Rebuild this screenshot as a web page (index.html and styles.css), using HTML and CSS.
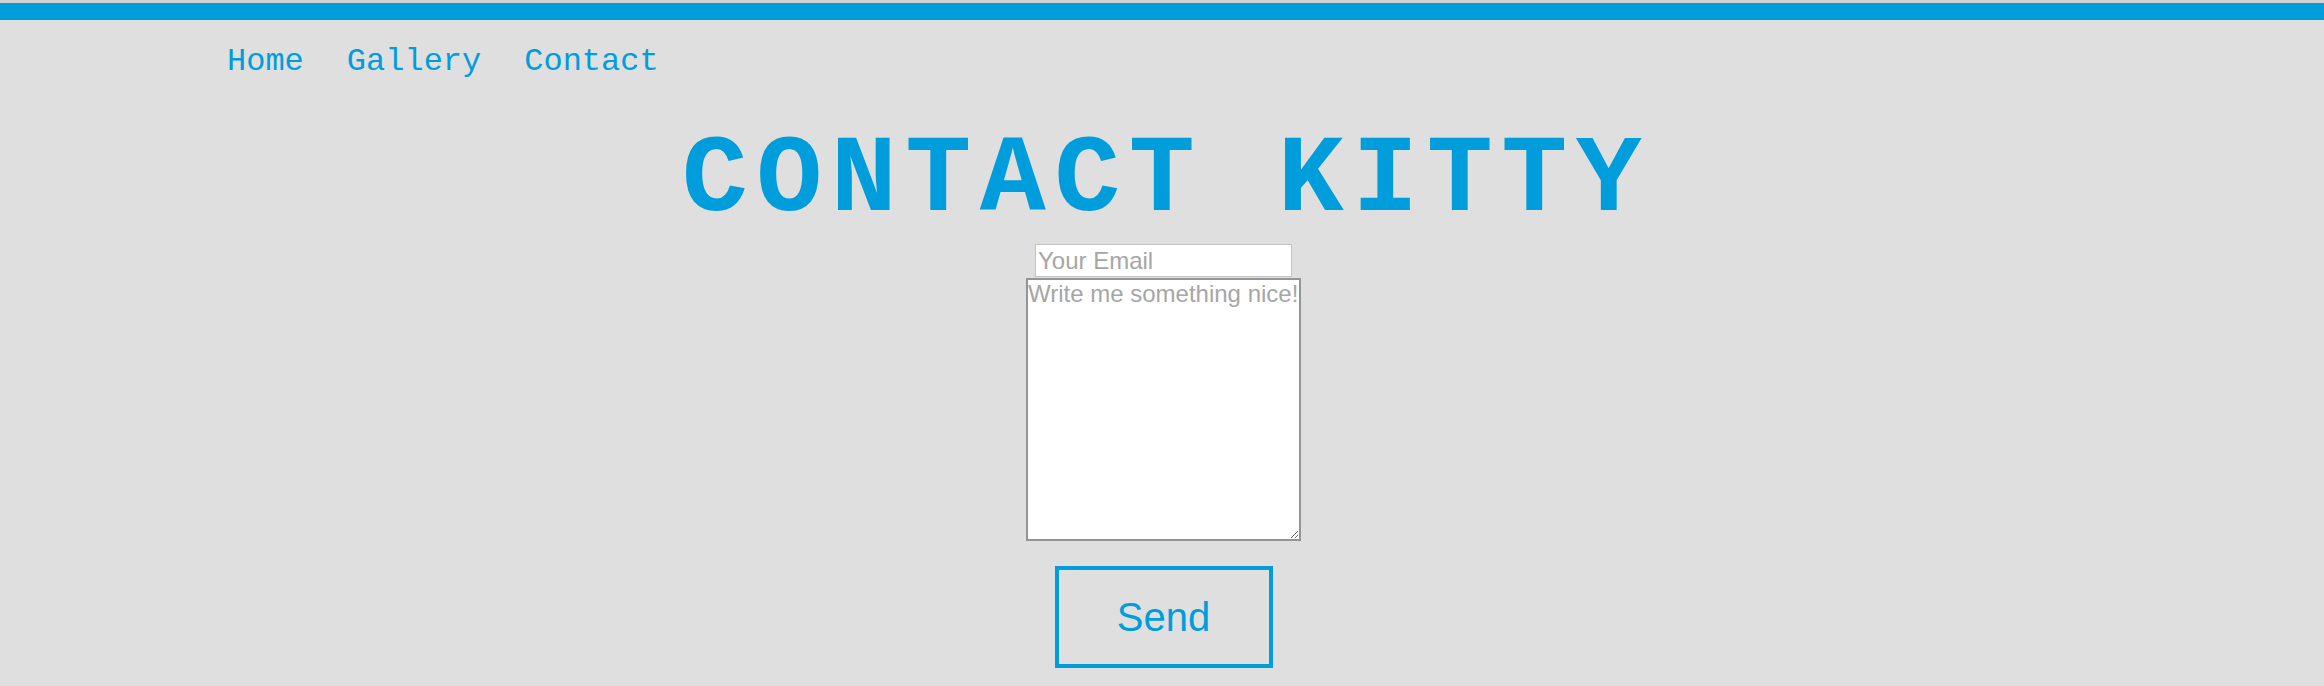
FILE: index.html
```html
<!DOCTYPE html>
<html lang="en">
<head>
<meta charset="utf-8">
<title>Contact Kitty</title>
<link rel="stylesheet" href="styles.css">
</head>
<body>
<div class="topbar"></div>
<nav class="nav">
  <a class="nav-link" href="#">Home</a>
  <a class="nav-link" href="#">Gallery</a>
  <a class="nav-link" href="#">Contact</a>
</nav>
<h1 class="title">CONTACT KITTY</h1>
<form class="contact-form">
  <input class="email" type="email" placeholder="Your Email">
  <textarea class="message" placeholder="Write me something nice!"></textarea>
  <button class="send" type="button">Send</button>
</form>
</body>
</html>
```
FILE: styles.css
```css
html, body {
  margin: 0;
  padding: 0;
  background: #dfdfdf;
}

body {
  font-family: "Liberation Sans", Arial, sans-serif;
}

.topbar {
  height: 17px;
  background: #009ddc;
  border-top: 3px solid #d2d2d2;
}

.nav {
  display: flex;
  gap: 43px;
  margin-top: 24px;
  padding-left: 227px;
  height: 36px;
}

.nav-link {
  font-family: "Courier New", "Liberation Mono", monospace;
  font-size: 32px;
  line-height: 36px;
  color: #009ddc;
  text-decoration: none;
}

.title {
  margin: 46px 0 0;
  font-family: "Courier New", "Liberation Mono", monospace;
  font-weight: bold;
  font-size: 110px;
  line-height: 110px;
  letter-spacing: 8.5px;
  text-align: center;
  color: #009ddc;
  padding-left: 8px;
}

.contact-form {
  display: flex;
  flex-direction: column;
  align-items: center;
  margin-top: 8px;
  padding-left: 3px;
}

.email {
  box-sizing: border-box;
  width: 257px;
  height: 33px;
  margin: 0;
  padding: 2px;
  border: 1px solid #c4c4c4;
  background: #fff;
  font-family: "Liberation Sans", Arial, sans-serif;
  font-size: 24px;
  color: #333;
  outline: none;
}

.message {
  box-sizing: border-box;
  width: 275px;
  height: 263px;
  margin: 1px 0 0;
  padding: 0;
  border: 2px solid #949494;
  background: #fff;
  font-family: "Liberation Sans", Arial, sans-serif;
  font-size: 24px;
  line-height: 28px;
  color: #333;
}

.email::placeholder,
.message::placeholder {
  color: #a6a6a6;
  opacity: 1;
}

.send {
  box-sizing: border-box;
  width: 218px;
  height: 102px;
  margin-top: 25px;
  border: 4px solid #009ddc;
  background: transparent;
  color: #009ddc;
  font-family: "Liberation Sans", Arial, sans-serif;
  font-size: 40px;
  padding: 0;
  cursor: pointer;
}
```
